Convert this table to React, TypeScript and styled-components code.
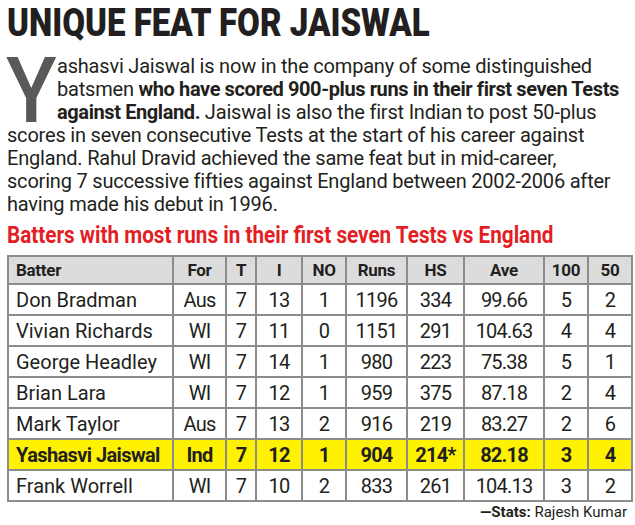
import styled, { createGlobalStyle } from "styled-components";

const GlobalStyle = createGlobalStyle`
  body {
    margin: 0;
    background: #ffffff;
    font-family: Roboto, "Liberation Sans", sans-serif;
    color: #231f20;
  }
`;

const Page = styled.div`
  box-sizing: border-box;
  width: 635px;
  padding: 3px 4px 0 7px;
`;

const Title = styled.h1`
  margin: 0;
  font-size: 38px;
  line-height: 40px;
  font-weight: 900;
  white-space: nowrap;
  transform: scaleX(0.87);
  transform-origin: left center;
`;

const Lede = styled.p`
  margin: 12px 0 0;
  font-size: 20px;
  line-height: 23px;
  letter-spacing: -0.2px;
  white-space: nowrap;
`;

const DropCap = styled.span`
  float: left;
  width: 49px;
  height: 62px;
  margin: 6px 2px 0 -1px;
  font-size: 90px;
  font-weight: 500;
  line-height: 62px;
  letter-spacing: 0;
  color: #58595b;
  transform: scaleX(0.92);
  transform-origin: left top;
`;

const Strong = styled.b`
  font-weight: 700;
  letter-spacing: -0.4px;
`;

const Subhead = styled.h2`
  margin: 8px 0 0;
  font-size: 23px;
  line-height: 24px;
  font-weight: 700;
  color: #e31e24;
  white-space: nowrap;
  transform: scaleX(0.9);
  transform-origin: left center;
`;

const Table = styled.table`
  margin-top: 7px;
  width: 625px;
  border-collapse: collapse;
  table-layout: fixed;
`;

const HeadRow = styled.tr`
  height: 28px;
  background: #dcdcdc;
`;

const Row = styled.tr<{ $hot?: boolean }>`
  height: 31px;
  background: ${(p) => (p.$hot ? "#fff200" : "#ffffff")};
  font-weight: ${(p) => (p.$hot ? 700 : 400)};
`;

const Th = styled.th<{ $left?: boolean }>`
  border: 2px solid #8c8c8c;
  padding: 0 0 0 ${(p) => (p.$left ? "7px" : "0")};
  font-size: 17px;
  font-weight: 700;
  letter-spacing: -0.3px;
  text-align: ${(p) => (p.$left ? "left" : "center")};
`;

const Td = styled.td<{ $left?: boolean; $hot?: boolean }>`
  border: 2px solid #8c8c8c;
  padding: 0 0 0 ${(p) => (p.$left ? "7px" : "0")};
  font-size: 20px;
  letter-spacing: ${(p) => (p.$left ? (p.$hot ? "-0.6px" : "0") : "-0.8px")};
  text-align: ${(p) => (p.$left ? "left" : "center")};
  white-space: nowrap;
`;

const Credit = styled.div`
  margin-top: 1px;
  padding-right: 4px;
  font-size: 15px;
  line-height: 18px;
  text-align: right;
`;

const cols = [
  ["Batter", 165],
  ["For", 53],
  ["T", 30],
  ["I", 46],
  ["NO", 44],
  ["Runs", 61],
  ["HS", 57],
  ["Ave", 80],
  ["100", 44],
  ["50", 44],
] as const;

const rows = [
  ["Don Bradman", "Aus", "7", "13", "1", "1196", "334", "99.66", "5", "2"],
  ["Vivian Richards", "WI", "7", "11", "0", "1151", "291", "104.63", "4", "4"],
  ["George Headley", "WI", "7", "14", "1", "980", "223", "75.38", "5", "1"],
  ["Brian Lara", "WI", "7", "12", "1", "959", "375", "87.18", "2", "4"],
  ["Mark Taylor", "Aus", "7", "13", "2", "916", "219", "83.27", "2", "6"],
  ["Yashasvi Jaiswal", "Ind", "7", "12", "1", "904", "214*", "82.18", "3", "4"],
  ["Frank Worrell", "WI", "7", "10", "2", "833", "261", "104.13", "3", "2"],
];

export default function App() {
  return (
    <Page>
      <GlobalStyle />
      <Title>UNIQUE FEAT FOR JAISWAL</Title>
      <Lede>
        <DropCap>Y</DropCap>
        ashasvi Jaiswal is now in the company of some distinguished
        <br />
        batsmen <Strong>who have scored 900-plus runs in their first seven Tests</Strong>
        <br />
        <Strong>against England.</Strong> Jaiswal is also the first Indian to post 50-plus
        <br />
        scores in seven consecutive Tests at the start of his career against
        <br />
        England. Rahul Dravid achieved the same feat but in mid-career,
        <br />
        scoring 7 successive fifties against England between 2002-2006 after
        <br />
        having made his debut in 1996.
      </Lede>
      <Subhead>Batters with most runs in their first seven Tests vs England</Subhead>
      <Table>
        <colgroup>
          {cols.map(([name, w]) => (
            <col key={name} style={{ width: w }} />
          ))}
        </colgroup>
        <thead>
          <HeadRow>
            {cols.map(([name], i) => (
              <Th key={name} $left={i === 0}>
                {name}
              </Th>
            ))}
          </HeadRow>
        </thead>
        <tbody>
          {rows.map((r) => {
            const hot = r[0] === "Yashasvi Jaiswal";
            return (
              <Row key={r[0]} $hot={hot}>
                {r.map((v, i) => (
                  <Td key={i} $left={i === 0} $hot={hot}>
                    {v}
                  </Td>
                ))}
              </Row>
            );
          })}
        </tbody>
      </Table>
      <Credit>
        <b>—Stats:</b> Rajesh Kumar
      </Credit>
    </Page>
  );
}
